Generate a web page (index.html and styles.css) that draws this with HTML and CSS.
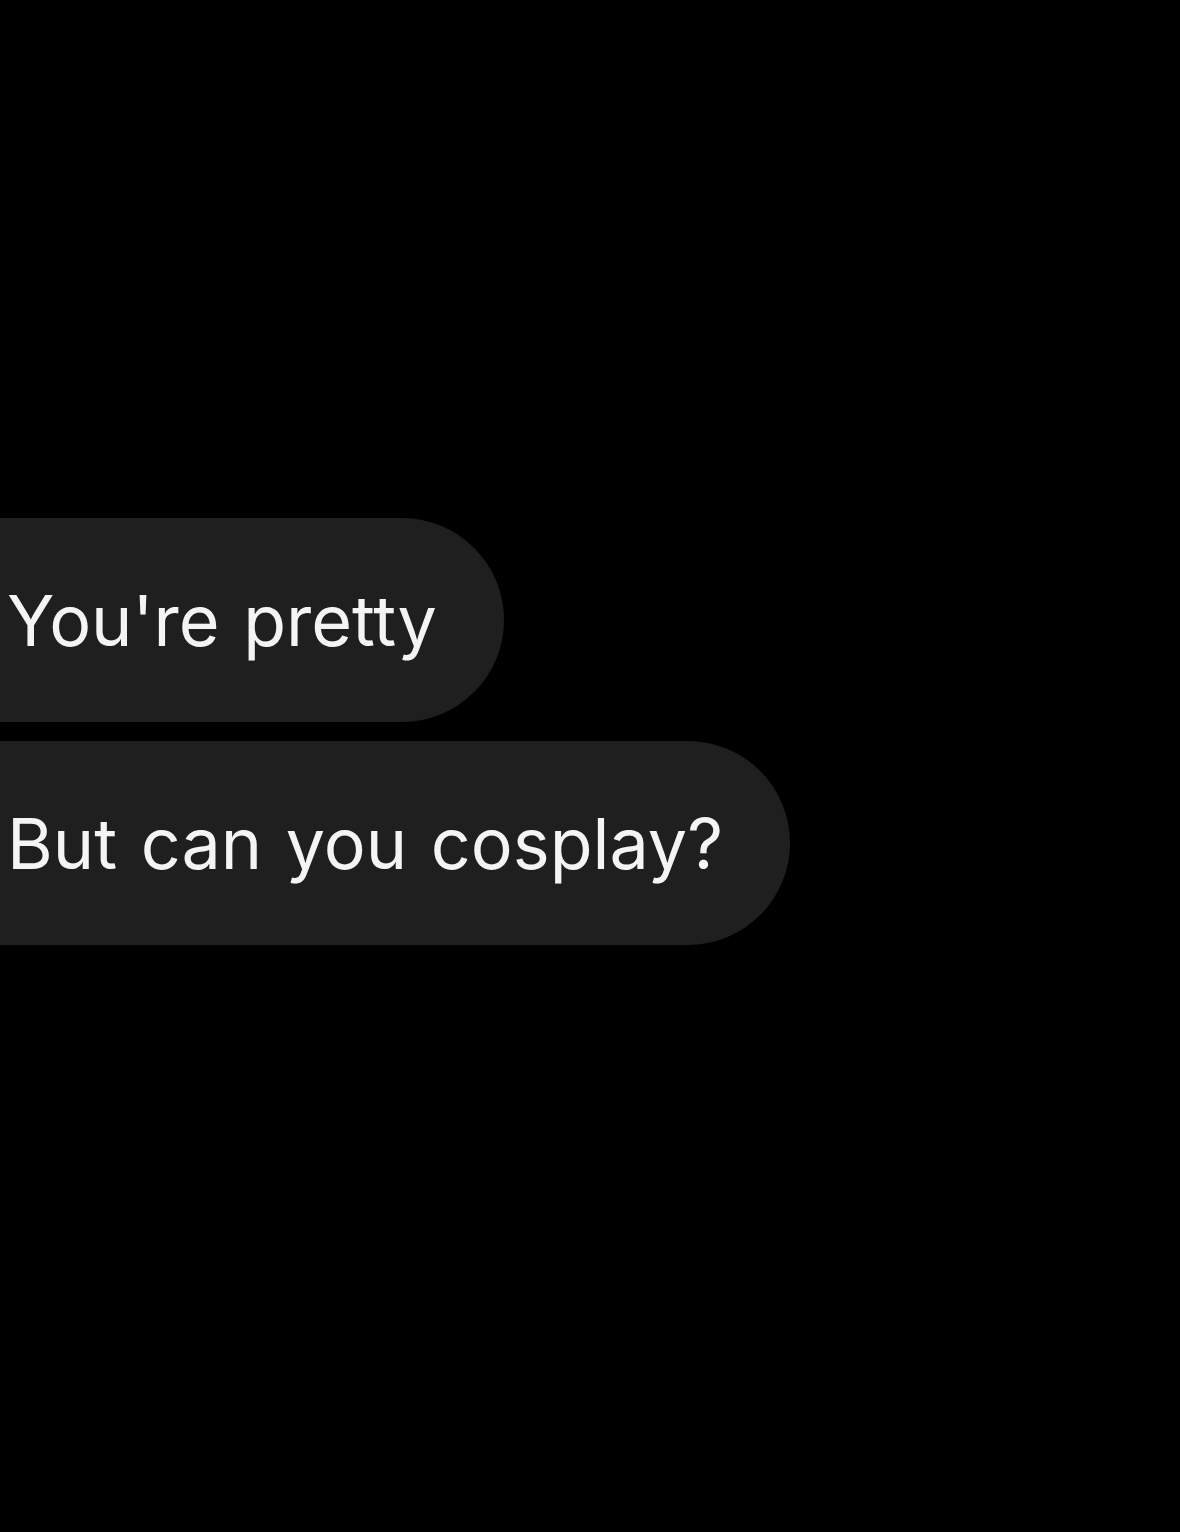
FILE: index.html
```html
<!DOCTYPE html>
<html lang="en">
<head>
<meta charset="utf-8">
<title>Messages</title>
<link rel="stylesheet" href="styles.css">
</head>
<body>
<main class="thread">
  <div class="bubble">You're pretty</div>
  <div class="bubble">But can you cosplay?</div>
</main>
</body>
</html>
```
FILE: styles.css
```css
html, body {
  margin: 0;
  padding: 0;
  background: #000;
}
body {
  width: 1180px;
  height: 1532px;
  overflow: hidden;
  font-family: Inter, "Liberation Sans", Arial, sans-serif;
}
.thread {
  display: flex;
  flex-direction: column;
  align-items: flex-start;
  gap: 19px;
  padding-top: 518px;
}
.bubble {
  background: #1f1f1f;
  color: #f4f4f4;
  font-size: 70px;
  line-height: 85px;
  word-spacing: 4px;
  font-variant-ligatures: none;
  font-feature-settings: "calt" 0, "liga" 0;
  margin-left: -100px;
  padding: 60px 67px 59px 107px;
  border-radius: 102px;
  white-space: nowrap;
}
```
